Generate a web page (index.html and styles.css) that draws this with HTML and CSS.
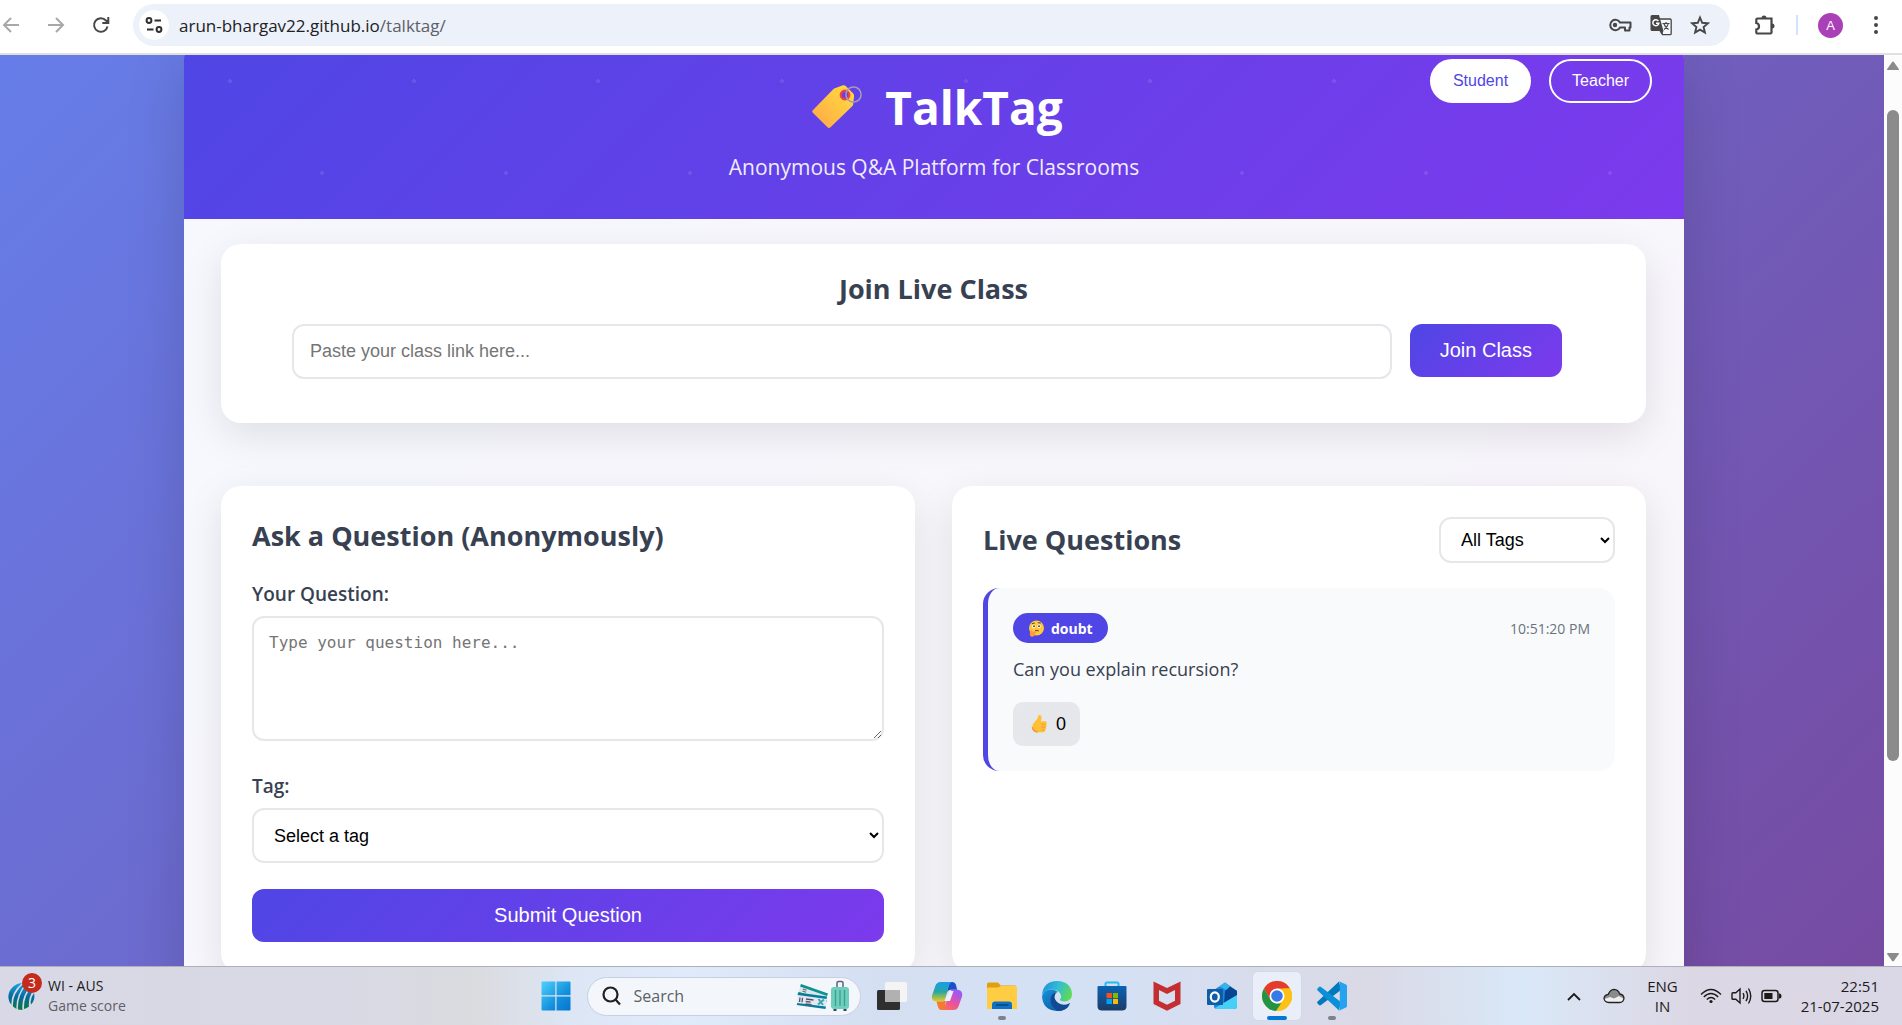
FILE: index.html
```html
<!DOCTYPE html>
<html lang="en">
<head>
    <meta charset="UTF-8">
    <meta name="viewport" content="width=device-width, initial-scale=1.0">
    <title>TalkTag</title>
    <link rel="stylesheet" href="styles.css">
</head>
<body>
    <!-- Browser toolbar -->
    <nav class="toolbar" aria-label="Browser">
        <button type="button" class="tool-btn faded" aria-label="Back">
            <svg width="18" height="18" viewBox="0 0 18 18" fill="none" stroke="currentColor" stroke-width="2"><path d="M17 9H2M9 2L2 9l7 7"/></svg>
        </button>
        <button type="button" class="tool-btn faded" aria-label="Forward">
            <svg width="18" height="18" viewBox="0 0 18 18" fill="none" stroke="currentColor" stroke-width="2"><path d="M1 9h15M9 2l7 7-7 7"/></svg>
        </button>
        <button type="button" class="tool-btn" aria-label="Reload">
            <svg width="18" height="18" viewBox="0 0 18 18" fill="none" stroke="currentColor" stroke-width="2"><path d="M15.5 10.500A6.800 6.800 0 1 1 14 4.500L16 6.500M16.300 1v6h-6"/></svg>
        </button>
        <div class="omnibox">
            <button type="button" class="site-info" aria-label="Site information">
                <svg width="18" height="18" viewBox="0 0 18 18" fill="none" stroke="currentColor" stroke-width="2"><circle cx="4" cy="4.500" r="2.400"/><path d="M9.500 4.500H16M2 13.500h6.500"/><circle cx="14" cy="13.500" r="2.400"/></svg>
            </button>
            <span class="url">arun-bhargav22.github.io<span class="path">/talktag/</span></span>
            <div class="omnibox-icons">
                <button type="button" class="plain" aria-label="Passwords">
                    <svg width="24" height="16" viewBox="0 0 24 16" fill="none" stroke="currentColor" stroke-width="2"><path d="M12 5.500A5.200 5.200 0 1 0 12 10.500h5v3h4.500v-3H22.500v-5z" stroke-linejoin="round"/><circle cx="7" cy="8" r="2.200" fill="currentColor" stroke="none"/></svg>
                </button>
                <button type="button" class="plain" aria-label="Translate this page">
                    <svg width="22" height="22" viewBox="0 0 22 22"><path d="M8.500 5H20a1.200 1.200 0 0 1 1.200 1.200V19.500a1.200 1.200 0 0 1-1.200 1.200H12.500z" fill="#f4f6fb" stroke="#474747" stroke-width="1.300"/><path d="M2 1h7l4.500 16H2A1.500 1.500 0 0 1 .5 15.500v-13A1.500 1.500 0 0 1 2 1z" fill="#474747"/><path d="M9.500 17h4l-2 3.500z" fill="#474747"/><path d="M8.300 7A3 3 0 1 0 8.800 9.300H6" fill="none" stroke="#fff" stroke-width="1.500"/><path d="M12.500 9.500h7M16 8v1.500M18.300 9.500c-.5 2.500-2 4.500-4.300 6M13.800 9.500c.8 2.500 2.500 4.500 4.700 6" fill="none" stroke="#474747" stroke-width="1.200"/></svg>
                </button>
                <button type="button" class="plain" aria-label="Bookmark this tab">
                    <svg width="20" height="20" viewBox="0 0 20 20" fill="none" stroke="currentColor" stroke-width="1.900"><path d="M10 2.500l2.200 5.300 5.700.5-4.300 3.700 1.300 5.600-4.900-3-4.900 3 1.300-5.600L2.100 8.300l5.700-.5z"/></svg>
                </button>
            </div>
        </div>
        <div class="toolbar-end">
            <button type="button" class="plain" aria-label="Extensions">
                <svg width="22" height="22" viewBox="0 0 22 22"><path d="M3.500 4.500H17.500V18.500a1 1 0 0 1-1 1H3.500a1.200 1.200 0 0 1-1.200-1.200V15.500a3.300 3.300 0 0 0 0-6.500V5.700a1.200 1.200 0 0 1 1.200-1.200z" fill="none" stroke="currentColor" stroke-width="2.200"/><path d="M7.500 4a2.500 2.500 0 0 1 5 0zM18 9.500a2.500 2.500 0 0 1 0 5z" fill="currentColor"/></svg>
            </button>
            <span class="divider"></span>
            <button type="button" class="avatar">A</button>
            <button type="button" class="plain" aria-label="Menu">
                <svg width="6" height="20" viewBox="0 0 6 20" fill="currentColor"><circle cx="3" cy="3" r="2"/><circle cx="3" cy="10" r="2"/><circle cx="3" cy="17" r="2"/></svg>
            </button>
        </div>
    </nav>

    <div class="viewport">
        <div class="page">
            <div class="container">
                <header class="header">
                    <div class="brand">
                        <h1>
                            <svg class="logo" width="52" height="46" viewBox="0 0 52 46">
                                <defs><linearGradient id="tagFill" x1="0" y1="1" x2="1" y2="0"><stop offset="0" stop-color="#ffa64a"/><stop offset="1" stop-color="#ffdf3d"/></linearGradient></defs>
                                <path d="M1.800 26.200L22 5.500q1-1 2.500-1.400L32 1.300q1.500-.5 2.700.6l7.500 7.500q1 1 .9 2.500l-1 8.500q-.2 1.300-1.200 2.200L19.500 43.300q-1.500 1.400-3 0L1.800 28.800q-1.400-1.400 0-2.600z" fill="url(#tagFill)"/>
                                <circle cx="34" cy="11" r="4.200" fill="#6440e7" stroke="#ee3f4b" stroke-width="2.400"/>
                                <circle cx="42.500" cy="10.500" r="7.600" fill="none" stroke="#a69bb5" stroke-width="1.500"/>
                            </svg>
                            TalkTag
                        </h1>
                        <p class="subtitle">Anonymous Q&amp;A Platform for Classrooms</p>
                    </div>
                    <div class="roles">
                        <button type="button" class="role active">Student</button>
                        <button type="button" class="role">Teacher</button>
                    </div>
                </header>

                <main class="content">
                    <section class="card join">
                        <h2>Join Live Class</h2>
                        <form class="join-form">
                            <input type="text" class="field" aria-label="Class link" placeholder="Paste your class link here...">
                            <button type="button" class="btn">Join Class</button>
                        </form>
                    </section>

                    <div class="columns">
                        <section class="card">
                            <h2>Ask a Question (Anonymously)</h2>
                            <form class="ask-form">
                                <label for="question">Your Question:</label>
                                <textarea id="question" class="field" placeholder="Type your question here..."></textarea>
                                <label for="tag">Tag:</label>
                                <select id="tag" class="field">
                                    <option>Select a tag</option>
                                </select>
                                <button type="button" class="btn">Submit Question</button>
                            </form>
                        </section>

                        <section class="card">
                            <div class="list-header">
                                <h2>Live Questions</h2>
                                <select class="field filter" aria-label="Filter by tag">
                                    <option>All Tags</option>
                                </select>
                            </div>
                            <article class="question">
                                <div class="question-top">
                                    <span class="tag">
                                        <svg width="17" height="17" viewBox="0 0 17 17"><circle cx="8.500" cy="8" r="7.500" fill="#ffc93c"/><circle cx="5.800" cy="6.200" r="1.700" fill="#fff"/><circle cx="11" cy="6.200" r="1.700" fill="#fff"/><circle cx="6" cy="6.200" r=".9" fill="#402a32"/><circle cx="11" cy="6.200" r=".9" fill="#402a32"/><path d="M3.800 3.800l3-.8M9.800 2.600l3 .6M7 10.800q2-1 3.800.2" fill="none" stroke="#6b3b34" stroke-width="1"/><path d="M2.500 10.500q1.500-.8 2 1.200l4-.6q1.200.6 0 1.500l-1.200.7q-.3 3.400-3.500 3.400-3.200-.4-1.300-6.200z" fill="#ff9a3e"/></svg>
                                        doubt
                                    </span>
                                    <time class="time">10:51:20 PM</time>
                                </div>
                                <p class="question-text">Can you explain recursion?</p>
                                <button type="button" class="vote">
                                    <svg width="17" height="20" viewBox="0 0 17 20"><path d="M8 1q2.200-.4 2.500 1.800.3 2.200-.6 4.500h4.300q1.600.1 1.500 1.500 0 1-.7 1.300 1 .6.700 1.700-.2 1-1 1.300.8.700.3 1.700-.3.800-1.100 1 .5.700.1 1.500-.4.900-1.600.9H7.500Q1.500 18 1.200 13.500 1 10 3.800 7.800 7 5 7.200 2q.1-.8.800-1z" fill="#ffc036"/><path d="M1.200 13q1.200 3.800 5.500 5.200Q1.400 18 1.200 13zM10.500 10.200h4M10.500 13.100h4M10.500 15.900h3" fill="#f3874f" stroke="#f0933d" stroke-width=".9"/></svg>
                                    0
                                </button>
                            </article>
                        </section>
                    </div>
                </main>
            </div>
        </div>

        <div class="scrollbar" aria-hidden="true">
            <svg width="12" height="10" viewBox="0 0 12 10"><path d="M5 1.200q1-1.200 2 0l4.700 6.500q.8 1.300-.7 1.300H1q-1.500 0-.7-1.300z" fill="#8b8b8b"/></svg>
            <div class="track"><div class="thumb"></div></div>
            <svg width="12" height="10" viewBox="0 0 12 10"><path d="M5 8.800q1 1.200 2 0l4.700-6.500Q12.500 1 11 1H1Q-.5 1 .3 2.300z" fill="#8b8b8b"/></svg>
        </div>
    </div>

    <!-- Taskbar -->
    <footer class="taskbar">
        <button type="button" class="widget">
            <span class="widget-icon">
                <svg width="28" height="30" viewBox="0 0 28 30">
                    <defs><linearGradient id="ball" x1="0" y1="0" x2="0" y2="1"><stop offset="0" stop-color="#12a6df"/><stop offset=".5" stop-color="#056ba1"/><stop offset="1" stop-color="#087a3d"/></linearGradient></defs>
                    <path d="M14 2C5 3-.5 10 .5 17.500q.5 4 3 6.500Q2.500 12 14 2zM15.500 2.500Q4 13 5 25.500l3.500 2.500Q7.500 15 17.500 2.500zM19 3Q9 15 10 28.500l4.500.5Q13 16 22.500 5zM23.500 6q-8 9-7.500 22 3-.6 5-2.500Q20 17 25.500 9zM26 12q-4.500 6-3 11.500Q27.500 19 26 12z" fill="url(#ball)"/>
                </svg>
                <span class="badge">3</span>
            </span>
            <span class="widget-text">WI - AUS<span class="muted">Game score</span></span>
        </button>

        <div class="apps">
            <button type="button" class="app" aria-label="Start">
                <svg width="30" height="30" viewBox="0 0 30 30"><defs><linearGradient id="win" gradientUnits="userSpaceOnUse" x1="0" y1="0" x2="30" y2="30"><stop offset="0" stop-color="#50d3fb"/><stop offset=".6" stop-color="#1390dd"/><stop offset="1" stop-color="#0673cd"/></linearGradient></defs><path d="M.5 1.500q0-1 1-1h12.800v13.800H.5zM15.500.5h13q1 0 1 1v12.800h-14zM.5 15.500h13.800v14H1.500q-1 0-1-1zM15.500 15.500h14v13q0 1-1 1h-13z" fill="url(#win)"/></svg>
            </button>
            <label class="search">
                <svg width="19" height="20" viewBox="0 0 19 20" fill="none" stroke="#202020" stroke-width="2.200"><circle cx="8.500" cy="8.500" r="7"/><path d="M13.500 13.500l4.500 5"/></svg>
                <input type="text" placeholder="Search" aria-label="Search">
                <svg width="56" height="32" viewBox="0 0 56 32">
                    <path d="M7 4L34 13.500 31 23 4 14z" fill="#dbe6e8"/>
                    <path d="M7 4L34 13.500l-1 2.600L6 6.600zM5 12l28 8-.8 2.500L4 14z" fill="#0b9391"/>
                    <path d="M9 9l3.500 1.300M8.500 11l3.500 1.200" stroke="#6b6680" stroke-width="1.200"/>
                    <path d="M4 13l29 4-1.500 12L3 25z" fill="#e6e8ef"/>
                    <path d="M4 12.500l29 4-.4 2.600L3.600 15zM3.200 23l28.700 3.600-.4 2.400L2.800 25z" fill="#087d9a"/>
                    <path d="M6 17.500L5.500 22M8.500 17.800L8 22.300M12 19l7.500 1M11.700 21.500l5 .6M11.500 24l6 .7" stroke="#55506a" stroke-width="1.300"/>
                    <path d="M24.500 19l4.500 6M30 19.500l-6 5" stroke="#35a9ba" stroke-width="2"/>
                    <path d="M43 8V3q0-1.500 1.500-1.500h3Q49 1.500 49 3v5" fill="none" stroke="#5b5f86" stroke-width="1.500"/>
                    <rect x="37" y="7" width="18" height="22" rx="3" fill="#6fcdbb"/><path d="M41.500 10v16M46 10v16M50.500 10v16" stroke="#3a9f94" stroke-width="1.300"/><path d="M39.500 29h3v2h-3zM49.500 29h3v2h-3z" fill="#30455a"/>
                </svg>
            </label>
            <button type="button" class="app" aria-label="Task view">
                <svg width="32" height="30" viewBox="0 0 32 30"><rect x="1" y="9" width="23" height="20" rx="1.500" fill="#2f2f2f"/><rect x="9" y="1" width="22" height="20" rx="1.500" fill="#f4f4f4"/><path d="M9 9h15v12H10.500Q9 21 9 19.500z" fill="#b1b1b1"/></svg>
            </button>
            <button type="button" class="app" aria-label="Copilot">
                <svg width="32" height="30" viewBox="0 0 32 30">
                    <defs>
                        <linearGradient id="copA" x1="0" y1="0" x2="0" y2="1"><stop offset="0" stop-color="#199be8"/><stop offset=".5" stop-color="#27a8a5"/><stop offset="1" stop-color="#e9cc1b"/></linearGradient>
                        <linearGradient id="copB" x1="0" y1="1" x2=".5" y2="0"><stop offset="0" stop-color="#ff7541"/><stop offset=".5" stop-color="#ea529e"/><stop offset="1" stop-color="#9d59f0"/></linearGradient>
                    </defs>
                    <path d="M18 1h3.500q2.500 0 3.300 2.500l1.400 5.300H20q-3 0-4 3z" fill="#1c4ec9"/>
                    <path d="M9.500 1H22q-3 .3-4 3.500L14.500 17q-1 3.500-4.500 3.500H5Q0 20 1 14.500L4.500 4.500Q6 1 9.500 1z" fill="url(#copA)"/>
                    <path d="M14 29h-3.500q-2.500 0-3.300-2.500l-1.700-6H11q3 0 4-3z" fill="#f37a32"/>
                    <path d="M22.500 29H10q3-.3 4-3.500L17.500 13q1-3.500 4.500-4.200h5Q32 9.500 31 15.500l-3.500 10Q26 29 22.500 29z" fill="url(#copB)"/>
                    <path d="M18.500 10h4L19 20h-5.500z" fill="#eef0f8"/>
                </svg>
            </button>
            <button type="button" class="app running" aria-label="File Explorer">
                <svg width="30" height="28" viewBox="0 0 30 28"><path d="M0 2q0-1.500 1.500-1.500H10q1 0 2 1L13.500 3.500H28q1 0 1 1V9H0z" fill="#dfa00d"/><path d="M0 7q0-1.500 1.500-1.500H11L14 4h14.500Q30 4 30 5.500V27H0z" fill="#ffcd43"/><path d="M5 27v-4.500q0-3 3-3h14q3 0 3 3V27z" fill="#0e72c4"/><path d="M9 23h12.500" stroke="#064379" stroke-width="1.500"/></svg>
            </button>
            <button type="button" class="app" aria-label="Edge">
                <svg width="30" height="30" viewBox="0 0 30 30">
                    <defs><linearGradient id="edgeTop" x1="0" y1=".3" x2="1" y2=".6"><stop offset="0" stop-color="#1e94dc"/><stop offset=".5" stop-color="#31bed2"/><stop offset="1" stop-color="#62dc4f"/></linearGradient><linearGradient id="edgeLow" x1="0" y1="0" x2="1" y2="1"><stop offset="0" stop-color="#1694dc"/><stop offset="1" stop-color="#094a96"/></linearGradient></defs>
                    <path d="M0 14Q1.500 0 15 0q14 .5 15 13 0 7-7 7.500-5.500 0-5-2.500 1.500-1 1-3.500Q17.500 8.500 9.500 8.500 3 8.500 0 14z" fill="url(#edgeTop)"/>
                    <path d="M0 15Q2 8.500 9 8.500q4.500 0 7 2.500-5 .5-5 6.500 1 8 10 8.500 4 0 6.500-2Q24 30 15 30 .5 29 0 15z" fill="url(#edgeLow)"/>
                    <path d="M15 11.200Q9 12 8.500 18q0 8.500 8 12Q24 30 28 22.500q-.3-.8-1 0-4 2-8 .8-6-2-6.500-7.300.3-3.500 2.500-4.800z" fill="#104a93"/>
                </svg>
            </button>
            <button type="button" class="app" aria-label="Microsoft Store">
                <svg width="30" height="30" viewBox="0 0 30 30"><defs><linearGradient id="bag" x1="0" y1="0" x2="0" y2="1"><stop offset="0" stop-color="#0a63b4"/><stop offset="1" stop-color="#1c3b66"/></linearGradient></defs><path d="M8.500 6V3q0-1.500 1.500-1.500h10q1.500 0 1.500 1.500v3" fill="none" stroke="#25b9f0" stroke-width="2"/><path d="M.5 6q0-1 1-1h27q1 0 1 1v19q0 4.500-4.500 4.500H5Q.5 29.500.5 25z" fill="url(#bag)"/><path d="M9.500 12H15v5.200H9.500z" fill="#f25022"/><path d="M16 12h5v5.200h-5z" fill="#7fba00"/><path d="M9.500 18H15v5H9.500z" fill="#00a4ef"/><path d="M16 18h5v5h-5z" fill="#ffb900"/></svg>
            </button>
            <button type="button" class="app" aria-label="McAfee">
                <svg width="28" height="30" viewBox="0 0 28 30"><path d="M.5.500L14 7 27.500.5V23L14 29.800.5 23zM6 9v10.800l8 4 8-4V9l-8 4z" fill="#c52e30" fill-rule="evenodd"/></svg>
            </button>
            <button type="button" class="app" aria-label="Outlook">
                <svg width="32" height="28" viewBox="0 0 32 28"><path d="M8 8L19 .500 31 9v15q0 3-3 3H11q-3 0-3-3z" fill="#1689dc"/><path d="M12 5.500l7-5L31 9l-4 3-12-7z" fill="#37b3ed"/><path d="M19 9l5-4.500L31 9v5l-13 7z" fill="#094493"/><path d="M9 26l22-13v11q0 3-3 3H11q-2 0-2-1z" fill="#46d0f8"/><rect x="1" y="7" width="16" height="16" rx="1" fill="#0f5da8"/><ellipse cx="8.800" cy="15" rx="4" ry="4.600" fill="none" stroke="#fff" stroke-width="2.200"/></svg>
            </button>
            <button type="button" class="app current" aria-label="Chrome">
                <svg width="30" height="30" viewBox="0 0 30 30"><circle cx="15" cy="15" r="15" fill="#fbc116"/><path d="M2 7.500A15 15 0 0 1 28 7.500H15L8.500 18.800z" fill="#e33b2e"/><path d="M2 7.500L8.500 18.800Q11 22.500 15 22.500h6.500L14 30A15 15 0 0 1 2 7.500z" fill="#239346"/><path d="M14 30l7.500-11.200Q23.500 15 21.500 7.500H28A15 15 0 0 1 14 30z" fill="#fbc116"/><circle cx="15" cy="15" r="7.500" fill="#fff"/><circle cx="15" cy="15" r="5.800" fill="#3779e9"/></svg>
            </button>
            <button type="button" class="app running" aria-label="Visual Studio Code">
                <svg width="30" height="30" viewBox="0 0 30 30"><path d="M22 .5L24 9 4 24q-1 .8-2 0L.6 22.500q-1-1 0-2z" fill="#0179bd"/><path d="M22 29.500L24 21 4 6q-1-.8-2 0L.6 7.500q-1 1 0 2z" fill="#0b8fd8"/><path d="M22 .3l7 3.200q1 .5 1 1.500v20q0 1-1 1.500l-7 3.200q.800-.6.800-2V2.300q0-1.400-.8-2z" fill="#27a2ee"/></svg>
            </button>
        </div>

        <div class="tray">
            <button type="button" class="plain" aria-label="Show hidden icons">
                <svg width="14" height="9" viewBox="0 0 14 9" fill="none" stroke="#1b1b1b" stroke-width="1.800"><path d="M1 8l6-6 6 6"/></svg>
            </button>
            <svg class="cloud" width="22" height="16" viewBox="0 0 22 16"><path d="M6 14.500q-4.500-.3-5-4 .2-3.500 4.300-4.200Q7 1.500 11 1.300q4.500.2 5.700 4.700 4 .5 4.300 4.200-.4 4-4.500 4.300z" fill="#8b8b8b"/><path d="M1.500 11L7 9l4 1.500 5-2.500 5 3q-.7 3.300-4.500 3.500H6q-3.800-.3-4.500-3.500z" fill="#efefef"/><path d="M6 14.500q-4.500-.3-5-4 .2-3.500 4.300-4.200Q7 1.500 11 1.300q4.500.2 5.700 4.700 4 .5 4.300 4.200-.4 4-4.500 4.300z" fill="none" stroke="#222" stroke-width="1.300"/></svg>
            <button type="button" class="plain lang">ENG<br>IN</button>
            <div class="status">
                <svg width="22" height="16" viewBox="0 0 22 16" fill="none" stroke="#1b1b1b" stroke-width="1.400"><path d="M1 6.500q10-10 20 0M3.800 9q7.200-7 14.400 0M6.800 11.500q4.200-4 8.400 0"/><circle cx="11" cy="13.500" r="1.600" fill="#1b1b1b" stroke="none"/></svg>
                <svg width="21" height="18" viewBox="0 0 21 18" fill="none" stroke="#1b1b1b" stroke-width="1.400"><path d="M1 6.500q0-.8.800-.8h3L9 2v14l-4.200-3.700h-3q-.8 0-.8-.8zM12 6.200q1.800 2.800 0 5.600M15 3.800q3.200 5.200 0 10.400M17.500 1.500q4.500 7.500 0 15"/></svg>
                <svg width="21" height="14" viewBox="0 0 21 14"><rect x="1" y="1.500" width="16" height="11" rx="2.500" fill="none" stroke="#1b1b1b" stroke-width="1.500"/><path d="M3.300 4h8.200v6H3.300z" fill="#1b1b1b"/><path d="M18 4.500h1q1.500.5 1.500 2.500T19 9.500h-1z" fill="#1b1b1b"/></svg>
            </div>
            <div class="clock">22:51<br>21-07-2025</div>
        </div>
    </footer>
</body>
</html>
```

FILE: styles.css
```css
* {
    margin: 0;
    padding: 0;
    box-sizing: border-box;
}

body {
    font-family: 'Open Sans', 'Segoe UI', sans-serif;
    display: flex;
    flex-direction: column;
    height: 100vh;
    overflow: hidden;
    color: #374151;
}

button {
    font-family: 'Liberation Sans', Arial, sans-serif;
    border: none;
    background: none;
    color: inherit;
    cursor: pointer;
}

svg {
    display: block;
    flex-shrink: 0;
}

.plain {
    display: flex;
    align-items: center;
}

/* Browser toolbar */
.toolbar {
    display: flex;
    align-items: center;
    padding: 4px 23px 7px 2px;
    border-bottom: 2px solid #dfe1df;
    background: #fff;
    color: #474747;
}

.tool-btn {
    width: 18px;
    height: 18px;
    margin-right: 27px;
}

.tool-btn.faded {
    color: #a8a8a8;
}

.tool-btn + .omnibox {
    margin-left: -4px;
}

.omnibox {
    flex: 1;
    display: flex;
    align-items: center;
    height: 42px;
    padding: 0 20px 0 6px;
    border-radius: 21px;
    background: #ecf1fa;
}

.site-info {
    display: flex;
    align-items: center;
    justify-content: center;
    width: 30px;
    height: 30px;
    margin-right: 10px;
    border-radius: 50%;
    background: #fff;
    color: #303030;
}

.url {
    flex: 1;
    font-size: 17px;
    color: #202124;
}

.url .path {
    color: #5c6066;
}

.omnibox-icons {
    display: flex;
    align-items: center;
    gap: 18px;
}

.toolbar-end {
    display: flex;
    align-items: center;
    gap: 20px;
    padding-left: 24px;
}

.divider {
    width: 2px;
    height: 20px;
    background: #d3e3fd;
}

.avatar {
    width: 25px;
    height: 25px;
    margin-right: 10px;
    border-radius: 50%;
    background: #a940b7;
    color: #fff;
    font-size: 13px;
}

/* Visible part of the scrolled page */
.viewport {
    flex: 1;
    display: flex;
    min-height: 0;
    overflow: hidden;
}

.page {
    flex: 1;
    display: flex;
    justify-content: center;
    align-items: flex-start;
    padding-right: 16px;
    overflow: hidden;
    background: linear-gradient(135deg, #667eea 0%, #764ba2 100%) 0 100% / 100% 105%;
}

.container {
    flex: 1;
    max-width: 1500px;
    margin-top: -20px;
    border-radius: 24px;
    overflow: hidden;
    background: rgba(255, 255, 255, 0.95);
    box-shadow: 0 25px 60px rgba(0, 0, 0, 0.15);
}

.header {
    display: grid;
    grid-template-columns: 1fr auto 1fr;
    padding: 24px 32px 37px;
    background:
        radial-gradient(circle at 25% 25%, rgba(255, 255, 255, 0.1) 2px, transparent 2px) 0 0 / 184px 184px,
        radial-gradient(circle at 75% 75%, rgba(255, 255, 255, 0.1) 2px, transparent 2px) 0 0 / 184px 184px,
        linear-gradient(135deg, #4f46e5 0%, #7c3aed 100%);
    color: #fff;
}

.brand {
    grid-column: 2;
    padding-top: 13px;
    text-align: center;
}

h1 {
    display: flex;
    align-items: center;
    justify-content: center;
    gap: 22px;
    margin-bottom: 10px;
    padding-left: 6px;
    font-size: 46px;
    line-height: 70px;
}

.subtitle {
    font-size: 21px;
    line-height: 30px;
    opacity: 0.9;
}

.roles {
    display: flex;
    justify-content: flex-end;
    align-items: flex-start;
    gap: 18px;
}

.role {
    height: 44px;
    padding: 0 21px;
    border: 2px solid #fff;
    border-radius: 22px;
    font-size: 16px;
}

.role.active {
    background: #fff;
    color: #4f46e5;
}

.content {
    padding: 25px 38px 37px 37px;
}

.card {
    padding: 31px;
    border-radius: 20px;
    background: #fff;
    box-shadow: 0 12px 40px rgba(0, 0, 0, 0.1);
}

h2 {
    font-size: 27px;
    line-height: 38px;
}

.join {
    margin-bottom: 63px;
    padding: 26px 84px 44px 71px;
}

.join h2 {
    margin: 0 0 16px 13px;
    text-align: center;
}

.join-form {
    display: flex;
    align-items: flex-start;
    gap: 18px;
}

.join-form .field {
    flex: 1;
}

.field {
    width: 100%;
    height: 55px;
    padding: 0 16px;
    border: 2px solid #e5e7eb;
    border-radius: 12px;
    background: #fff;
    font-family: 'Liberation Sans', Arial, sans-serif;
    font-size: 18px;
}

.btn {
    height: 53px;
    padding: 0 30px;
    border-radius: 12px;
    background: linear-gradient(135deg, #4f46e5, #7c3aed);
    color: #fff;
    font-size: 20px;
}

.columns {
    display: grid;
    grid-template-columns: 1fr 1fr;
    gap: 37px;
}

.ask-form {
    display: flex;
    flex-direction: column;
    margin-top: 26px;
}

.ask-form label {
    margin-bottom: 9px;
    font-size: 19px;
    font-weight: 600;
    line-height: 26px;
}

.ask-form .field {
    margin-bottom: 26px;
}

.ask-form textarea.field {
    height: 125px;
    margin-bottom: 32px;
    padding: 15px;
    font-family: 'DejaVu Sans Mono', Consolas, monospace;
    font-size: 16px;
    resize: vertical;
}

.list-header {
    display: flex;
    justify-content: space-between;
    align-items: center;
    margin-bottom: 25px;
}

.filter {
    width: 176px;
    height: 46px;
}

.question {
    padding: 25px;
    border-left: 5px solid #4f46e5;
    border-radius: 16px;
    background: #f9fafb;
}

.question-top {
    display: flex;
    justify-content: space-between;
    align-items: center;
    margin-bottom: 12px;
}

.tag {
    display: flex;
    align-items: center;
    gap: 6px;
    height: 30px;
    padding: 0 15px;
    border-radius: 15px;
    background: #4f46e5;
    color: #fff;
    font-size: 14px;
    font-weight: 700;
}

.time {
    font-size: 14px;
    color: #6b7280;
}

.question-text {
    margin-bottom: 19px;
    font-size: 18px;
    line-height: 28px;
}

.vote {
    display: flex;
    align-items: center;
    gap: 8px;
    height: 44px;
    padding: 0 14px 0 18px;
    border-radius: 10px;
    background: #e5e7eb;
    color: #000;
    font-size: 18px;
}

.scrollbar {
    display: flex;
    flex-direction: column;
    align-items: center;
    width: 18px;
    padding: 6px 0 4px;
    background: #fcfcfc;
}

.track {
    flex: 1;
    width: 12px;
    padding: 39px 0 191px;
}

.thumb {
    height: 100%;
    border-radius: 6px;
    background: #8b8b8b;
}

/* Taskbar */
.taskbar {
    display: grid;
    grid-template-columns: 1fr auto 1fr;
    align-items: center;
    height: 59px;
    padding: 0 23px 0 8px;
    border-top: 1px solid #aeb0b9;
    background: linear-gradient(90deg, #d9d8e6 0%, #d8d9e4 18%, #dadbdf 25%, #dde6f5 30%, #dfeafa 36%, #d5dff2 46%, #d4e1f5 58%, #dad9e6 72%, #d9e8f8 80%, #dcd7e4 89%, #dad7e6 100%);
    color: #1b1b1b;
    font-size: 14px;
    line-height: 20px;
}

.widget {
    display: flex;
    align-items: center;
    justify-self: start;
    gap: 12px;
    font: inherit;
    text-align: left;
}

.widget-icon {
    position: relative;
}

.badge {
    position: absolute;
    top: -8px;
    left: 14px;
    width: 20px;
    height: 20px;
    border-radius: 50%;
    background: #c42b1c;
    color: #fff;
    text-align: center;
}

.widget-text .muted {
    display: block;
    color: #5f5f66;
}

.apps {
    display: flex;
    align-items: center;
    gap: 7px;
}

.app {
    display: flex;
    align-items: center;
    justify-content: center;
    position: relative;
    width: 48px;
    height: 48px;
    border-radius: 5px;
}

.app.current {
    background: #e9eef8;
    box-shadow: 0 0 1px 1px #d3d9e6;
}

/* Running indicator under the icon */
.app.running::after,
.app.current::after {
    content: '';
    position: absolute;
    bottom: 0;
    width: 8px;
    height: 4px;
    border-radius: 2px;
    background: #7d8290;
}

.app.current::after {
    width: 20px;
    background: #0078d4;
}

.search {
    display: flex;
    align-items: center;
    gap: 13px;
    width: 274px;
    height: 39px;
    padding: 0 10px 0 14px;
    border: 1px solid #c7d0e0;
    border-radius: 20px;
    background: #f3f7fc;
}

.search input {
    flex: 1;
    min-width: 0;
    border: none;
    outline: none;
    background: none;
    font-family: inherit;
    font-size: 16px;
}

.search input::placeholder {
    color: #5d6066;
}

.tray {
    display: flex;
    align-items: center;
    justify-self: end;
    font-size: 15px;
}

.cloud {
    margin: 0 22px;
}

.lang {
    font: inherit;
    text-align: center;
}

.status {
    display: flex;
    align-items: center;
    gap: 9px;
    margin: 0 19px 0 22px;
}

.clock {
    text-align: right;
}
```
